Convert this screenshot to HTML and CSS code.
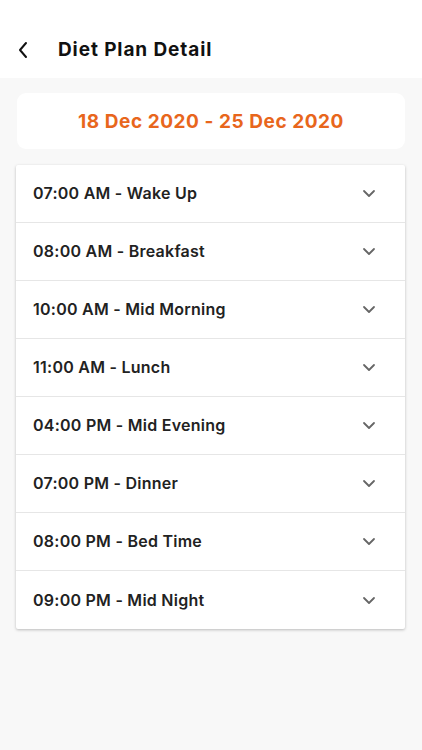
FILE: index.html
```html
<!DOCTYPE html>
<html>
<head>
<meta charset="utf-8">
<link rel="stylesheet" href="styles.css">
</head>
<body>
<header class="topbar">
  <svg class="back" width="12" height="18" viewBox="0 0 12 18"><path d="M9 2 L3 9 L9 16" fill="none" stroke="#111" stroke-width="2" stroke-linecap="round" stroke-linejoin="round"/></svg>
  <h1 class="title">Diet Plan Detail</h1>
</header>
<main class="content">
  <div class="date-card">18 Dec 2020 - 25 Dec 2020</div>
  <div class="list">
    <div class="row"><span>07:00 AM - Wake Up</span><svg class="chev" width="14" height="9" viewBox="0 0 14 9"><path d="M2 2 L7 7 L12 2" fill="none" stroke="#666" stroke-width="1.8" stroke-linecap="round" stroke-linejoin="round"/></svg></div>
    <div class="row"><span>08:00 AM - Breakfast</span><svg class="chev" width="14" height="9" viewBox="0 0 14 9"><path d="M2 2 L7 7 L12 2" fill="none" stroke="#666" stroke-width="1.8" stroke-linecap="round" stroke-linejoin="round"/></svg></div>
    <div class="row"><span>10:00 AM - Mid Morning</span><svg class="chev" width="14" height="9" viewBox="0 0 14 9"><path d="M2 2 L7 7 L12 2" fill="none" stroke="#666" stroke-width="1.8" stroke-linecap="round" stroke-linejoin="round"/></svg></div>
    <div class="row"><span>11:00 AM - Lunch</span><svg class="chev" width="14" height="9" viewBox="0 0 14 9"><path d="M2 2 L7 7 L12 2" fill="none" stroke="#666" stroke-width="1.8" stroke-linecap="round" stroke-linejoin="round"/></svg></div>
    <div class="row"><span>04:00 PM - Mid Evening</span><svg class="chev" width="14" height="9" viewBox="0 0 14 9"><path d="M2 2 L7 7 L12 2" fill="none" stroke="#666" stroke-width="1.8" stroke-linecap="round" stroke-linejoin="round"/></svg></div>
    <div class="row"><span>07:00 PM - Dinner</span><svg class="chev" width="14" height="9" viewBox="0 0 14 9"><path d="M2 2 L7 7 L12 2" fill="none" stroke="#666" stroke-width="1.8" stroke-linecap="round" stroke-linejoin="round"/></svg></div>
    <div class="row"><span>08:00 PM - Bed Time</span><svg class="chev" width="14" height="9" viewBox="0 0 14 9"><path d="M2 2 L7 7 L12 2" fill="none" stroke="#666" stroke-width="1.8" stroke-linecap="round" stroke-linejoin="round"/></svg></div>
    <div class="row"><span>09:00 PM - Mid Night</span><svg class="chev" width="14" height="9" viewBox="0 0 14 9"><path d="M2 2 L7 7 L12 2" fill="none" stroke="#666" stroke-width="1.8" stroke-linecap="round" stroke-linejoin="round"/></svg></div>
  </div>
</main>
</body>
</html>
```
FILE: styles.css
```css
* { box-sizing: border-box; }
html, body { margin: 0; padding: 0; }
body {
  width: 422px;
  height: 750px;
  background: #f8f8f8;
  font-family: Inter, "Noto Sans", sans-serif;
  overflow: hidden;
}
.topbar {
  height: 78px;
  background: #fff;
  display: flex;
  align-items: center;
  padding: 22px 0 0 17px;
  gap: 29px;
}
.back { display: block; margin-top: -1px; }
.title {
  margin: 0;
  font-size: 19px;
  font-weight: 700;
  color: #111;
  letter-spacing: 0.9px;
  padding-bottom: 2px;
}
.content {
  padding: 15px 17px 0 16px;
}
.date-card {
  margin-left: 1px;
  height: 56px;
  background: #fff;
  border-radius: 9px;
  display: flex;
  align-items: center;
  justify-content: center;
  color: #e8661c;
  font-size: 19px;
  font-weight: 700;
  letter-spacing: 0.55px;
}
.list {
  margin-top: 16px;
  background: #fff;
  border-radius: 2px;
  box-shadow: 0 1px 3px rgba(0,0,0,0.25);
}
.row {
  height: 58px;
  display: flex;
  align-items: center;
  justify-content: space-between;
  padding: 0 29px 0 17px;
  border-bottom: 1px solid #e6e6e6;
  font-size: 16px;
  font-weight: 600;
  color: #222;
  letter-spacing: 0.25px;
}
.row:last-child { border-bottom: none; }
.row span { padding-bottom: 1px; }
.chev { display: block; }
```
